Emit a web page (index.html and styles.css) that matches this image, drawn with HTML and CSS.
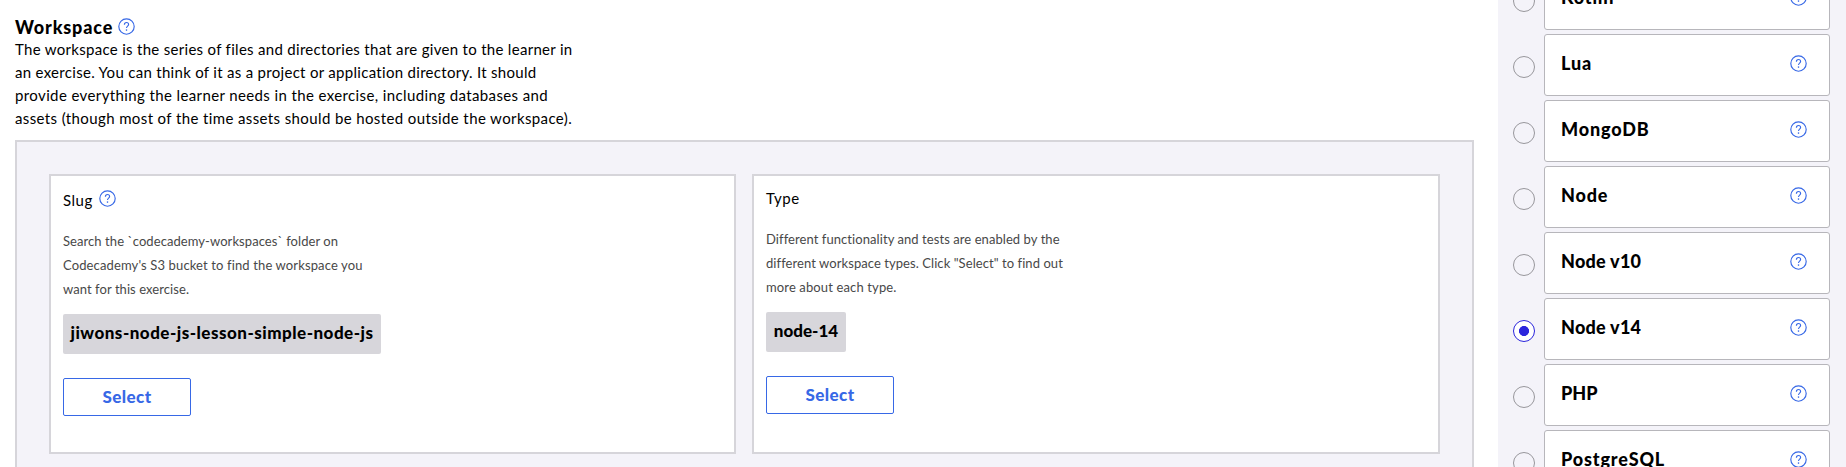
FILE: index.html
```html
<!DOCTYPE html>
<html lang="en">
<head>
<meta charset="utf-8">
<title>Workspace</title>
<link rel="stylesheet" href="styles.css">
</head>
<body>
<svg width="0" height="0" class="defs">
  <symbol id="help" viewBox="0 0 17 17">
    <circle cx="8.5" cy="8.5" r="7.7" fill="none" stroke="#3768e6" stroke-width="1.15"/>
    <path d="M6.4 6.7c0-1.4.9-2.2 2.1-2.2s2.1.8 2.1 2c0 1.7-2.1 1.7-2.1 3.6" fill="none" stroke="#3768e6" stroke-width="1.15"/>
    <circle cx="8.5" cy="12.1" r=".8" fill="#3768e6"/>
  </symbol>
</svg>
<div class="page">
  <main class="main">
    <h2 class="title"><span>Workspace</span><svg class="help"><use href="#help"/></svg></h2>
    <p class="intro">The workspace is the series of files and directories that are given to the learner in<br>an exercise. You can think of it as a project or application directory. It should<br><span class="loose">provide everything the learner needs in the exercise, including databases and<br>assets (though most of the time assets should be hosted outside the workspace).</span></p>
    <section class="panel">
      <article class="card card-slug">
        <h3 class="card-title"><span>Slug</span><svg class="help"><use href="#help"/></svg></h3>
        <p class="card-text">Search the `codecademy-workspaces` folder on<br><span class="wide">Codecademy's S3 bucket to find the workspace you</span><br>want for this exercise.</p>
        <div class="tag tag-slug">jiwons-node-js-lesson-simple-node-js</div>
        <button class="select">Select</button>
      </article>
      <article class="card card-type">
        <h3 class="card-title"><span>Type</span></h3>
        <p class="card-text">Different functionality and tests are enabled by the<br>different workspace types. Click "Select" to find out<br><span class="wide">more about each type.</span></p>
        <div class="tag tag-type">node-14</div>
        <button class="select">Select</button>
      </article>
    </section>
  </main>
  <aside class="sidebar">
    <div class="row"><span class="radio"></span><div class="option"><span class="name">Kotlin</span><svg class="help"><use href="#help"/></svg></div></div>
    <div class="row"><span class="radio"></span><div class="option"><span class="name">Lua</span><svg class="help"><use href="#help"/></svg></div></div>
    <div class="row"><span class="radio"></span><div class="option"><span class="name">MongoDB</span><svg class="help"><use href="#help"/></svg></div></div>
    <div class="row"><span class="radio"></span><div class="option"><span class="name">Node</span><svg class="help"><use href="#help"/></svg></div></div>
    <div class="row"><span class="radio"></span><div class="option"><span class="name versioned">Node v10</span><svg class="help"><use href="#help"/></svg></div></div>
    <div class="row"><span class="radio checked"></span><div class="option"><span class="name versioned">Node v14</span><svg class="help"><use href="#help"/></svg></div></div>
    <div class="row"><span class="radio"></span><div class="option"><span class="name acronym">PHP</span><svg class="help"><use href="#help"/></svg></div></div>
    <div class="row"><span class="radio"></span><div class="option"><span class="name">PostgreSQL</span><svg class="help"><use href="#help"/></svg></div></div>
  </aside>
</div>
</body>
</html>
```
FILE: styles.css
```css
* { box-sizing: border-box; margin: 0; padding: 0; }
html, body { height: 467px; overflow: hidden; }
body { background: #fff; color: #000; font-family: Lato, "Open Sans", sans-serif; white-space: nowrap; }
.defs { display: block; height: 0; }
.page { display: flex; height: 467px; overflow: hidden; }
.main { width: 1498px; padding: 15px 24px 0 15px; }
.help { width: 17px; height: 17px; flex: none; display: block; }

.title { display: flex; align-items: center; gap: 5px; height: 24px; font-size: 18px; line-height: 24px; font-weight: 900; letter-spacing: .85px; }
.title .help { margin-top: -1px; }
.intro { margin-top: -1px; font-size: 15px; line-height: 23px; letter-spacing: .3px; }
.loose { letter-spacing: .385px; }

.panel { display: flex; gap: 16px; height: 360px; margin-top: 10px; padding: 32px; background: #f4f3f9; border: 2px solid #d6d5da; }
.card { height: 280px; background: #fff; border: 2px solid #d6d5da; padding-left: 12px; display: flex; flex-direction: column; align-items: flex-start; }
.card-slug { width: 687px; padding-top: 14px; }
.card-type { flex: 1; padding-top: 12px; }
.card-title { display: flex; gap: 6px; height: 20px; font-size: 15px; line-height: 20px; font-weight: 400; letter-spacing: .5px; }
.card-text { margin-top: 19px; font-size: 13px; line-height: 24px; letter-spacing: .07px; color: #484848; }
.wide { letter-spacing: .13px; }
.tag { height: 40px; margin-top: 13px; border-radius: 2px; background: #d7d6db; font-size: 17px; line-height: 37px; font-weight: 900; text-align: center; }
.tag-slug { width: 318px; letter-spacing: .49px; }
.tag-type { width: 80px; }
.select { width: 128px; height: 38px; margin-top: 24px; border: 1px solid #3768e6; border-radius: 2px; background: #fff; color: #3768e6; font: 900 17px/36px Lato, sans-serif; letter-spacing: .4px; }

.sidebar { width: 348px; padding-left: 15px; background: #f4f3f9; display: flex; flex-direction: column; gap: 4px; margin-top: -32px; height: 499px; }
.row { display: flex; align-items: center; gap: 9px; height: 62px; flex: none; }
.radio { width: 22px; height: 22px; margin-top: 4px; border: 1px solid #98979c; border-radius: 50%; }
.checked { border-color: #2b25dc; background: radial-gradient(circle, #2b25dc 4.7px, #fff 5.3px); }
.option { width: 286px; height: 62px; padding: 0 22px 4px 16px; border: 1px solid #b7b6bb; border-radius: 3px; background: #fff; display: flex; align-items: center; justify-content: space-between; font-size: 18px; font-weight: 900; }
.name { letter-spacing: .85px; }
.versioned { letter-spacing: .25px; }
.acronym { letter-spacing: 0; }
```
